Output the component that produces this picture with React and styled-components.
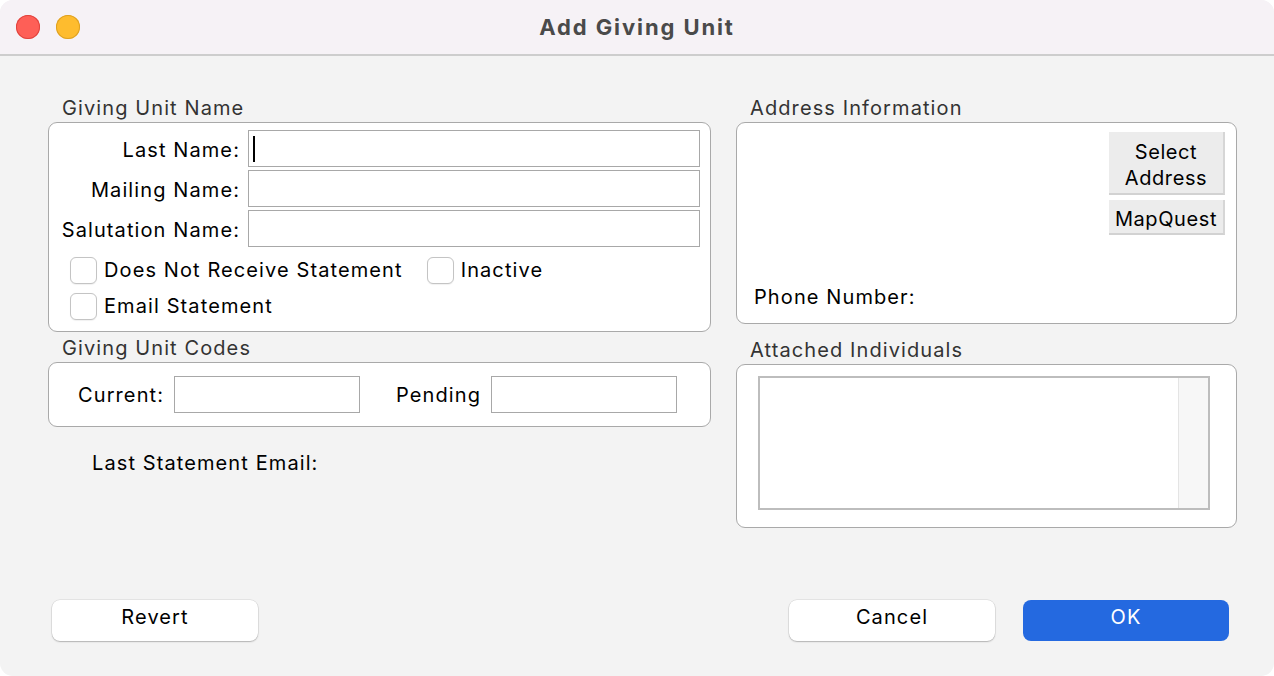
import React from "react";
import styled, { createGlobalStyle } from "styled-components";

const GlobalStyle = createGlobalStyle`
  html, body {
    margin: 0;
    padding: 0;
    background: #ffffff;
  }
  body {
    font-family: "Inter", "Liberation Sans", sans-serif;
    -webkit-font-smoothing: antialiased;
  }
  * {
    box-sizing: border-box;
  }
`;

const App = () => {
  return (
    <>
      <GlobalStyle />
      <Window>
        <TitleBar>
          <Lights>
            <Light color="#fe5f57" edge="#e0443e" />
            <Light color="#febc2e" edge="#dea123" />
          </Lights>
          <Title>Add Giving Unit</Title>
          <div />
        </TitleBar>
        <Body>
          <Columns>
            <Column>
              <GroupTitle>Giving Unit Name</GroupTitle>
              <Group>
                <NameGrid>
                  <FieldLabel>Last Name:</FieldLabel>
                  <TextField>
                    <Caret />
                  </TextField>
                  <FieldLabel>Mailing Name:</FieldLabel>
                  <TextField />
                  <FieldLabel>Salutation Name:</FieldLabel>
                  <TextField />
                </NameGrid>
                <CheckRows>
                  <CheckRow>
                    <Check>
                      <Box />
                      Does Not Receive Statement
                    </Check>
                    <Check>
                      <Box />
                      Inactive
                    </Check>
                  </CheckRow>
                  <CheckRow>
                    <Check>
                      <Box />
                      Email Statement
                    </Check>
                  </CheckRow>
                </CheckRows>
              </Group>

              <GroupTitle space={4}>Giving Unit Codes</GroupTitle>
              <Group>
                <CodesRow>
                  <PlainLabel>Current:</PlainLabel>
                  <CodeField />
                  <PlainLabel gap={36}>Pending</PlainLabel>
                  <CodeField />
                </CodesRow>
              </Group>

              <LastEmail>Last Statement Email:</LastEmail>
            </Column>

            <Column>
              <GroupTitle>Address Information</GroupTitle>
              <Group>
                <AddressBody>
                  <AddressActions>
                    <FlatButton tall>
                      Select
                      <br />
                      Address
                    </FlatButton>
                    <FlatButton>MapQuest</FlatButton>
                  </AddressActions>
                  <Phone>Phone Number:</Phone>
                </AddressBody>
              </Group>

              <GroupTitle space={14}>Attached Individuals</GroupTitle>
              <Group>
                <ListWrap>
                  <List>
                    <ListRows />
                    <Scrollbar />
                  </List>
                </ListWrap>
              </Group>
            </Column>
          </Columns>

          <Footer>
            <PushButton>Revert</PushButton>
            <FooterRight>
              <PushButton>Cancel</PushButton>
              <PushButton primary>OK</PushButton>
            </FooterRight>
          </Footer>
        </Body>
      </Window>
    </>
  );
};

const Window = styled.div`
  width: 1274px;
  height: 676px;
  border-radius: 13px;
  overflow: hidden;
  background: #f3f3f3;
  display: flex;
  flex-direction: column;
  color: #000;
  font-size: 20px;
  letter-spacing: 1.1px;
`;

const TitleBar = styled.div`
  height: 56px;
  flex-shrink: 0;
  background: #f6f2f6;
  border-bottom: 2px solid #cdcdcd;
  display: grid;
  grid-template-columns: 1fr auto 1fr;
  align-items: center;
`;

const Lights = styled.div`
  display: flex;
  gap: 16px;
  padding-left: 16px;
`;

const Light = styled.span`
  width: 24px;
  height: 24px;
  border-radius: 50%;
  background: ${(p) => p.color};
  box-shadow: inset 0 0 0 1px ${(p) => p.edge};
`;

const Title = styled.div`
  font-size: 22px;
  font-weight: 700;
  color: #4a4a4a;
  letter-spacing: 1.9px;
`;

const Body = styled.div`
  flex: 1;
  display: flex;
  flex-direction: column;
  justify-content: space-between;
  padding: 40px 0 35px 0;
`;

const Columns = styled.div`
  display: grid;
  grid-template-columns: 663px 501px;
  column-gap: 25px;
  padding-left: 48px;
`;

const Column = styled.div`
  display: flex;
  flex-direction: column;
`;

const GroupTitle = styled.div`
  height: 24px;
  line-height: 24px;
  padding-left: 14px;
  margin-top: ${(p) => (p.space ? `${p.space}px` : "0")};
  margin-bottom: 2px;
  color: #333;
`;

const Group = styled.div`
  background: #fff;
  border: 1px solid #a9a9a9;
  border-radius: 9px;
`;

const NameGrid = styled.div`
  display: grid;
  grid-template-columns: 191px 1fr;
  column-gap: 8px;
  row-gap: 3px;
  padding: 7px 10px 0 0;
  align-items: center;
`;

const FieldLabel = styled.div`
  text-align: right;
  white-space: nowrap;
  padding-top: 2px;
`;

const TextField = styled.div`
  height: 37px;
  background: #fff;
  border: 1px solid #a8a8a8;
  display: flex;
  align-items: center;
  padding-left: 4px;
`;

const Caret = styled.span`
  width: 2px;
  height: 26px;
  background: #000;
`;

const CheckRows = styled.div`
  padding: 5px 0 7px 21px;
`;

const CheckRow = styled.div`
  height: 36px;
  display: flex;
  align-items: center;
  gap: 24px;
`;

const Check = styled.label`
  display: flex;
  align-items: center;
  gap: 7px;
  white-space: nowrap;
`;

const Box = styled.span`
  width: 27px;
  height: 27px;
  border-radius: 6px;
  border: 1px solid #c4c4c4;
  background: #fff;
  box-shadow: 0 0.5px 1px rgba(0, 0, 0, 0.06);
`;

const CodesRow = styled.div`
  display: flex;
  align-items: center;
  height: 63px;
  padding-left: 29px;
`;

const PlainLabel = styled.div`
  margin-left: ${(p) => (p.gap ? `${p.gap}px` : "0")};
  margin-right: 10px;
  white-space: nowrap;
`;

const CodeField = styled(TextField)`
  width: 186px;
`;

const LastEmail = styled.div`
  padding-left: 44px;
  margin-top: 24px;
  line-height: 24px;
`;

const AddressBody = styled.div`
  height: 200px;
  display: flex;
  flex-direction: column;
  justify-content: space-between;
  padding: 9px 11px 14px 17px;
`;

const AddressActions = styled.div`
  align-self: flex-end;
  display: flex;
  flex-direction: column;
  gap: 5px;
  width: 116px;
`;

const FlatButton = styled.div`
  height: ${(p) => (p.tall ? "63px" : "35px")};
  background: #ececec;
  border-bottom: 2px solid #d2d2d2;
  border-right: 2px solid #d6d6d6;
  display: flex;
  align-items: center;
  justify-content: center;
  text-align: center;
  line-height: 26px;
  padding-top: 4px;
  letter-spacing: 0.6px;
`;

const Phone = styled.div`
  line-height: 24px;
`;

const ListWrap = styled.div`
  padding: 11px 26px 17px 21px;
`;

const List = styled.div`
  height: 134px;
  border: 2px solid #bdbdbd;
  display: flex;
  background: #fff;
`;

const ListRows = styled.div`
  flex: 1;
`;

const Scrollbar = styled.div`
  width: 30px;
  background: #f7f7f7;
  border-left: 1px solid #e4e4e4;
`;

const Footer = styled.div`
  display: flex;
  justify-content: space-between;
  padding: 0 45px 0 52px;
`;

const FooterRight = styled.div`
  display: flex;
  gap: 28px;
`;

const PushButton = styled.button`
  width: 206px;
  height: 41px;
  border-radius: 8px;
  font-family: inherit;
  font-size: 20px;
  letter-spacing: 1.1px;
  padding: 0 0 7px;
  border: none;
  background: ${(p) => (p.primary ? "#2469e0" : "#ffffff")};
  color: ${(p) => (p.primary ? "#ffffff" : "#000000")};
  box-shadow: ${(p) =>
    p.primary
      ? "none"
      : "0 0 0 0.5px rgba(0,0,0,0.12), 0 1px 1.5px rgba(0,0,0,0.22)"};
  cursor: pointer;
`;

export default App;
